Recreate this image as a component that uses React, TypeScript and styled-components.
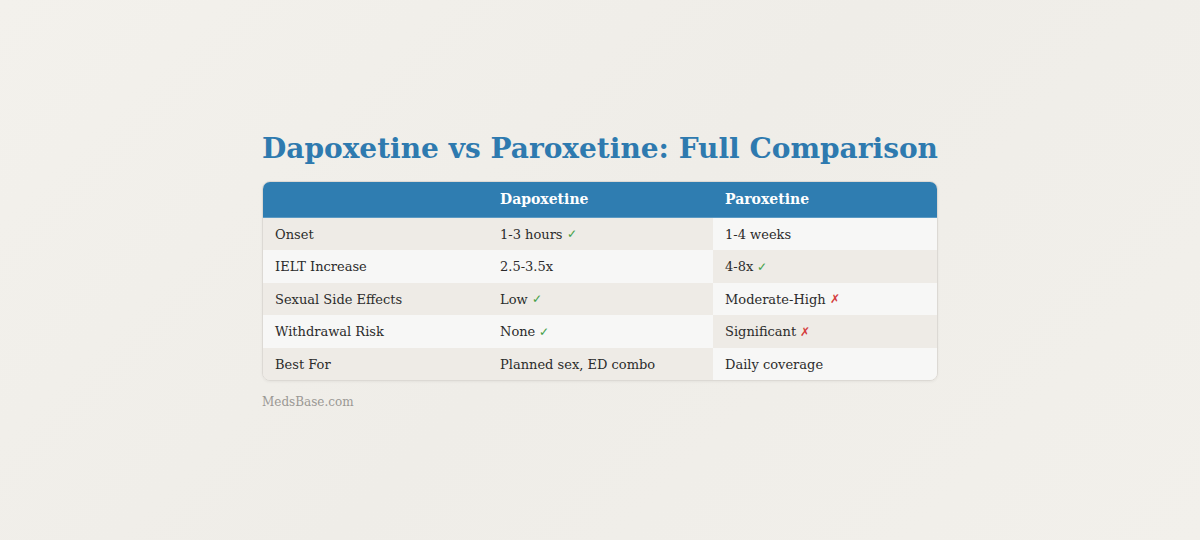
import React from "react";
import styled, { createGlobalStyle } from "styled-components";

type Mark = "yes" | "no" | undefined;

const ROWS: { label: string; dapo: string; dapoMark?: Mark; paro: string; paroMark?: Mark }[] = [
  { label: "Onset", dapo: "1-3 hours", dapoMark: "yes", paro: "1-4 weeks" },
  { label: "IELT Increase", dapo: "2.5-3.5x", paro: "4-8x", paroMark: "yes" },
  { label: "Sexual Side Effects", dapo: "Low", dapoMark: "yes", paro: "Moderate-High", paroMark: "no" },
  { label: "Withdrawal Risk", dapo: "None", dapoMark: "yes", paro: "Significant", paroMark: "no" },
  { label: "Best For", dapo: "Planned sex, ED combo", paro: "Daily coverage" },
];

const MarkGlyph: React.FC<{ mark: Mark }> = ({ mark }) => {
  if (!mark) return null;
  return <Glyph $mark={mark}>{mark === "yes" ? "✓" : "✗"}</Glyph>;
};

const App: React.FC = () => {
  return (
    <Page>
      <GlobalStyle />
      <Content>
        <Title>Dapoxetine vs Paroxetine: Full Comparison</Title>
        <Table>
          <HeadRow>
            <HeadCell />
            <HeadCell>Dapoxetine</HeadCell>
            <HeadCell>Paroxetine</HeadCell>
          </HeadRow>
          {ROWS.map((row, i) => {
            const odd = i % 2 === 0;
            return (
              <BodyRow key={row.label}>
                <Cell $shade={odd}>{row.label}</Cell>
                <Cell $shade={odd}>
                  {row.dapo}
                  <MarkGlyph mark={row.dapoMark} />
                </Cell>
                <Cell $shade={!odd}>
                  {row.paro}
                  <MarkGlyph mark={row.paroMark} />
                </Cell>
              </BodyRow>
            );
          })}
        </Table>
        <Source>MedsBase.com</Source>
      </Content>
    </Page>
  );
};

const GlobalStyle = createGlobalStyle`
  html, body {
    margin: 0;
    padding: 0;
  }
  body {
    font-family: "DejaVu Serif", serif;
    background: #f2f0eb;
  }
`;

const Page = styled.div`
  width: 1200px;
  height: 540px;
  display: flex;
  align-items: center;
  justify-content: center;
  background: linear-gradient(135deg, #f3f1ec 0%, #efede8 50%, #f2f0eb 100%);
`;

const Content = styled.div`
  width: 676px;
  display: flex;
  flex-direction: column;
`;

const Title = styled.h1`
  margin: 0 0 14px 0;
  font-family: "DejaVu Serif", serif;
  font-size: 28px;
  font-weight: bold;
  color: #2e7aaf;
  line-height: 36px;
  white-space: nowrap;
`;

const Table = styled.div`
  border: 1px solid #dcd9d4;
  border-radius: 8px;
  overflow: hidden;
  box-shadow: 0 1px 3px rgba(0, 0, 0, 0.05);
`;

const HeadRow = styled.div`
  display: grid;
  grid-template-columns: 225px 225px 1fr;
  height: 35px;
  background: #2f7db1;
  border-bottom: 1px solid #5b9ac4;
`;

const HeadCell = styled.div`
  display: flex;
  align-items: center;
  padding: 0 12px;
  font-size: 14px;
  font-weight: bold;
  color: #ffffff;
`;

const BodyRow = styled.div`
  display: grid;
  grid-template-columns: 225px 225px 1fr;
  height: 32.5px;
`;

const Cell = styled.div<{ $shade: boolean }>`
  display: flex;
  align-items: center;
  padding: 0 12px;
  font-size: 13px;
  color: #2b2b2b;
  background: ${({ $shade }) => ($shade ? "#eeebe6" : "#f7f7f6")};
`;

const Glyph = styled.span<{ $mark: "yes" | "no" }>`
  margin-left: 4px;
  font-size: 12px;
  color: ${({ $mark }) => ($mark === "yes" ? "#44a047" : "#d43c3c")};
`;

const Source = styled.div`
  margin-top: 14px;
  font-size: 12px;
  color: #9a9894;
`;

export default App;
